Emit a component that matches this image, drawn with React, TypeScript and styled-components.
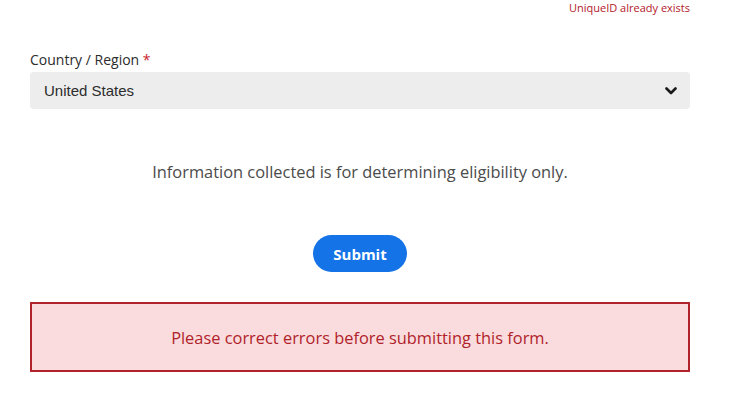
import React from 'react';
import styled, { createGlobalStyle } from 'styled-components';

const GlobalStyle = createGlobalStyle`
  body {
    margin: 0;
    background: #ffffff;
    font-family: "Open Sans", "Noto Sans", sans-serif;
  }
`;

const App: React.FC = () => (
  <>
    <GlobalStyle />
    <FormWrapper>
      <FieldError>UniqueID already exists</FieldError>
      <Field>
        <FieldLabel>
          Country / Region <Required>*</Required>
        </FieldLabel>
        <SelectBox>
          <SelectValue>United States</SelectValue>
          <svg width="12" height="8" viewBox="0 0 12 8">
            <path d="M1.5 1.5 L6 6 L10.5 1.5" fill="none" stroke="#1a1a1a" strokeWidth="2.6" strokeLinecap="round" strokeLinejoin="round" />
          </svg>
        </SelectBox>
      </Field>
      <Notice>Information collected is for determining eligibility only.</Notice>
      <SubmitRow>
        <SubmitButton>Submit</SubmitButton>
      </SubmitRow>
      <ErrorBox>Please correct errors before submitting this form.</ErrorBox>
    </FormWrapper>
  </>
);

const FormWrapper = styled.div`
  width: 660px;
  margin-left: 30px;
  display: flex;
  flex-direction: column;
`;

const FieldError = styled.div`
  align-self: flex-end;
  font-size: 11px;
  line-height: 15px;
  color: #b3202a;
`;

const Field = styled.div`
  margin-top: 34px;
  display: flex;
  flex-direction: column;
`;

const FieldLabel = styled.label`
  font-size: 14px;
  line-height: 22px;
  color: #2c2c2c;
`;

const Required = styled.span`
  color: #c9252d;
`;

const SelectBox = styled.div`
  height: 37px;
  margin-top: 1px;
  background: #ededed;
  border-radius: 4px;
  display: flex;
  align-items: center;
  justify-content: space-between;
  padding: 0 13px 0 14px;
`;

const SelectValue = styled.span`
  font-family: "Liberation Sans", Arial, sans-serif;
  font-size: 15px;
  color: #2c2c2c;
`;

const Notice = styled.p`
  margin: 50px 0 0;
  text-align: center;
  font-size: 16.4px;
  line-height: 26px;
  color: #4b4b4b;
`;

const SubmitRow = styled.div`
  margin-top: 50px;
  display: flex;
  justify-content: center;
`;

const SubmitButton = styled.button`
  width: 94px;
  height: 37px;
  border: none;
  border-radius: 19px;
  background: #1473e6;
  color: #ffffff;
  font-family: "Open Sans", sans-serif;
  font-weight: 700;
  font-size: 15px;
`;

const ErrorBox = styled.div`
  margin-top: 30px;
  height: 70px;
  box-sizing: border-box;
  border: 2px solid #b0232a;
  background: #fadcde;
  display: flex;
  align-items: center;
  justify-content: center;
  font-size: 16.4px;
  color: #b0232a;
`;

export default App;
